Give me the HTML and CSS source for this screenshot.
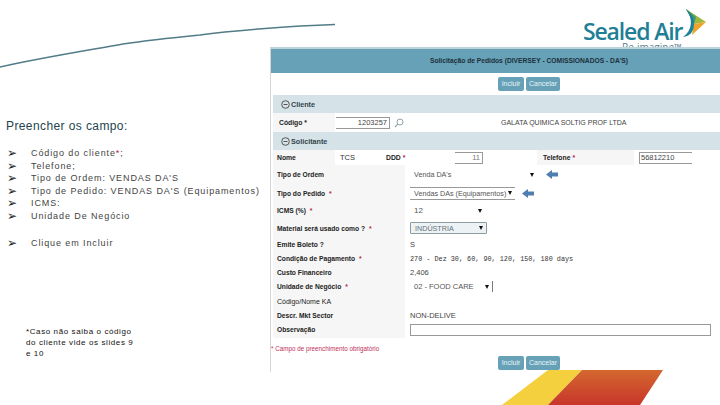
FILE: index.html
```html
<!DOCTYPE html>
<html lang="pt">

<head>
    <meta charset="UTF-8">
    <title>Solicitação de Pedidos</title>
    <link rel="stylesheet" href="styles.css">
</head>

<body>
    <div class="slide">
        <svg class="curve" width="340" height="70" viewBox="0 0 340 70">
            <path d="M0 67 C40 58 90 50 123 44 C150 40 180 37 200 35 C230 31 290 26 335 24.500" fill="none" stroke="#527c87" stroke-width="1.5" />
        </svg>

        <div class="logo">
            <div class="logo-name">Sealed Air</div>
            <div class="logo-tag">Re-imagine&#8482;</div>
            <svg class="logo-sail" width="26" height="32" viewBox="0 0 26 32">
                <path d="M3 1 L23 14 L11 16 Z" fill="#9db83c" />
                <path d="M3 1 L13 9 L11 16 Z" fill="#3d9a78" />
                <path d="M23 14 L11 16 L9 27 Z" fill="#eea32d" />
                <path d="M3 1 C10 10 10 22 0 29 C7 28 11 24 11 16 C11 10 8 5 3 1 Z" fill="#1f7f96" />
            </svg>
        </div>

        <div class="intro">
            <h1 class="intro-title">Preencher os campo:</h1>
            <ul class="steps">
                <li><span class="mark">&#10146;</span>Código do cliente<span class="req">*</span>;</li>
                <li><span class="mark">&#10146;</span>Telefone;</li>
                <li><span class="mark">&#10146;</span>Tipo de Ordem: VENDAS DA'S</li>
                <li><span class="mark">&#10146;</span>Tipo de Pedido: VENDAS DA'S (Equipamentos)</li>
                <li><span class="mark">&#10146;</span>ICMS:</li>
                <li><span class="mark">&#10146;</span>Unidade De Negócio</li>
            </ul>
            <ul class="steps steps-last">
                <li><span class="mark">&#10146;</span>Clique em Incluir</li>
            </ul>
            <p class="note">*Caso não saiba o código<br>do cliente vide os slides 9<br>e 10</p>
        </div>

        <div class="panel">
            <div class="panel-head">Solicitação de Pedidos (DIVERSEY - COMISSIONADOS - DA'S)</div>
            <div class="actions">
                <span class="btn btn-add">Incluir</span>
                <span class="btn btn-cancel">Cancelar</span>
            </div>

            <div class="section">
                <svg class="toggle" width="9" height="9" viewBox="0 0 9 9">
                    <circle cx="4.500" cy="4.500" r="3.800" fill="none" stroke="#555" />
                    <path d="M2.500 4.500 H6.500" stroke="#555" />
                </svg>
                Cliente
            </div>
            <div class="row row-client">
                <div class="cell-label cell-code">Código *</div>
                <div class="input input-code">1203257</div>
                <svg class="search" width="10" height="10" viewBox="0 0 10 10">
                    <circle cx="6" cy="4" r="3" fill="none" stroke="#8fa5ae" />
                    <path d="M3.800 6.200 L1 9" stroke="#8fa5ae" stroke-width="1.200" />
                </svg>
                <div class="client-name">GALATA QUIMICA SOLTIG PROF LTDA</div>
            </div>

            <div class="section">
                <svg class="toggle" width="9" height="9" viewBox="0 0 9 9">
                    <circle cx="4.500" cy="4.500" r="3.800" fill="none" stroke="#555" />
                    <path d="M2.500 4.500 H6.500" stroke="#555" />
                </svg>
                Solicitante
            </div>
            <div class="row row-contact">
                <div class="cell-label cell-name">Nome</div>
                <div class="contact-value">TCS</div>
                <div class="cell-label cell-ddd">DDD <span class="req">*</span></div>
                <div class="input input-ddd">11</div>
                <div class="cell-label cell-phone">Telefone <span class="req">*</span></div>
                <div class="input input-phone">56812210</div>
            </div>

            <div class="fields">
                <div class="field-label">Tipo de Ordem</div>
                <div class="field-value">
                    <div class="select select-order">Venda DA's<i class="caret"></i></div>
                    <svg class="pointer pointer-order" width="12" height="9" viewBox="0 0 12 9">
                        <polygon points="0,4.500 6,0 6,2.500 12,2.500 12,6.500 6,6.500 6,9" fill="#4f7fb0" />
                    </svg>
                </div>

                <div class="field-label">Tipo do Pedido <span class="req">*</span></div>
                <div class="field-value">
                    <div class="select select-type">Vendas DAs (Equipamentos)<i class="caret"></i></div>
                    <svg class="pointer pointer-type" width="12" height="9" viewBox="0 0 12 9">
                        <polygon points="0,4.500 6,0 6,2.500 12,2.500 12,6.500 6,6.500 6,9" fill="#4f7fb0" />
                    </svg>
                </div>

                <div class="field-label">ICMS (%) <span class="req">*</span></div>
                <div class="field-value">
                    <div class="select select-icms">12<i class="caret"></i></div>
                </div>

                <div class="field-label">Material será usado como ? <span class="req">*</span></div>
                <div class="field-value">
                    <div class="select select-material">INDÚSTRIA<i class="caret"></i></div>
                </div>

                <div class="field-label">Emite Boleto ?</div>
                <div class="field-value">S</div>

                <div class="field-label">Condição de Pagamento <span class="req">*</span></div>
                <div class="field-value field-mono">270 - Dez 30, 60, 90, 120, 150, 180 days</div>

                <div class="field-label">Custo Financeiro</div>
                <div class="field-value">2,406</div>

                <div class="field-label">Unidade de Negócio <span class="req">*</span></div>
                <div class="field-value">
                    <div class="select select-unit">02 - FOOD CARE<i class="caret"></i></div>
                </div>

                <div class="field-label field-label-big">Código/Nome KA</div>
                <div class="field-value"></div>

                <div class="field-label">Descr. Mkt Sector</div>
                <div class="field-value">NON-DELIVE</div>

                <div class="field-label">Observação</div>
                <div class="field-value">
                    <div class="textarea"></div>
                </div>
            </div>

            <div class="required-note">* Campo de preenchimento obrigatório</div>
            <div class="actions actions-bottom">
                <span class="btn btn-add">Incluir</span>
                <span class="btn btn-cancel">Cancelar</span>
            </div>
        </div>

        <svg class="ribbon" width="170" height="35" viewBox="0 0 170 35">
            <defs>
                <linearGradient id="ribbonRed" x1="0" y1="0" x2="0" y2="1">
                    <stop offset="0" stop-color="#d4682f" />
                    <stop offset="1" stop-color="#c8352a" />
                </linearGradient>
            </defs>
            <polygon points="46,0 80,0 46,35 0,35" fill="#f4cf3e" />
            <polygon points="80,0 161,0 138,35 46,35" fill="url(#ribbonRed)" />
        </svg>
    </div>
</body>

</html>
```

FILE: styles.css
```css
body,
h1,
p,
ul,
li {
    padding: 0;
    margin: 0;
}

li {
    list-style: none;
}

body {
    background: #fff;
    font-family: "Liberation Sans", Arial, sans-serif;
}

.slide {
    width: 720px;
    height: 405px;
    position: relative;
    overflow: hidden;
    display: flex;
}

.curve {
    position: absolute;
    left: 0;
    top: 0;
}

/* logo */
.logo {
    position: absolute;
    left: 583px;
    top: 8px;
    width: 125px;
    height: 40px;
}

.logo-name {
    position: absolute;
    left: 0;
    top: 14px;
    font-family: "Open Sans", sans-serif;
    font-size: 23px;
    line-height: 18px;
    font-weight: 600;
    letter-spacing: -1.150px;
    color: #1f7f96;
    white-space: nowrap;
}

.logo-tag {
    position: absolute;
    left: 39px;
    top: 34px;
    font-family: "Open Sans", sans-serif;
    font-size: 10px;
    line-height: 10px;
    color: #5f7f8a;
    white-space: nowrap;
}

.logo-sail {
    position: absolute;
    left: 100px;
    top: 0;
}

/* left text */
.intro {
    width: 270px;
    flex: none;
    padding: 119px 0 0 6px;
    box-sizing: border-box;
}

.intro-title {
    font-size: 12px;
    line-height: 14px;
    font-weight: normal;
    letter-spacing: 0.400px;
    color: #24444f;
}

.steps {
    margin-top: 14px;
    font-size: 9px;
    line-height: 12.600px;
    letter-spacing: 0.900px;
    color: #444;
}

.steps li {
    display: flex;
    white-space: pre;
}

.steps-last {
    margin-top: 14px;
}

.mark {
    width: 25px;
    flex: none;
    padding-left: 1px;
    box-sizing: border-box;
    font-family: "DejaVu Sans", sans-serif;
    font-size: 12px;
    line-height: 12px;
    letter-spacing: 0;
    color: #222;
}

.req {
    color: #b3253f;
}

.note {
    margin: 77px 0 0 20px;
    font-size: 8px;
    line-height: 11px;
    letter-spacing: 0.600px;
    color: #111;
    white-space: nowrap;
}

/* form panel */
.panel {
    width: 450px;
    height: 325px;
    flex: none;
    margin-top: 47px;
    border-left: 1px solid #d5d5d5;
    box-sizing: border-box;
    display: flex;
    flex-direction: column;
    font-size: 7.500px;
    color: #333;
    background: #fff;
    position: relative;
}

.panel-head {
    height: 26px;
    border-top: 2px solid #bdd3dc;
    box-sizing: border-box;
    background: #66a1b8;
    text-align: center;
    line-height: 23px;
    font-weight: bold;
    font-size: 6.700px;
    color: #1d2f38;
    padding-left: 67px;
    white-space: nowrap;
}

.actions {
    height: 22px;
    flex: none;
    display: flex;
    gap: 2px;
    align-items: center;
    padding-left: 227px;
}

.actions-bottom {
    height: 14px;
    margin-top: 1px;
}

.btn {
    height: 14px;
    border-radius: 2px;
    background: #66a1b8;
    color: #eaf3f6;
    line-height: 14px;
    font-size: 7px;
    text-align: center;
    box-sizing: border-box;
}

.btn-add {
    width: 26px;
}

.btn-cancel {
    width: 34px;
}

.section {
    height: 18px;
    flex: none;
    margin-left: 2px;
    padding-left: 8px;
    display: flex;
    align-items: center;
    gap: 1px;
    background: #d5e2e7;
    font-weight: bold;
    font-size: 7.200px;
    color: #33444c;
}

.row {
    display: flex;
    align-items: center;
    margin-left: 2px;
    flex: none;
}

.row-client {
    height: 19px;
}

.row-contact {
    height: 15px;
}

.cell-label {
    height: 100%;
    box-sizing: border-box;
    background: #f6f6f6;
    display: flex;
    align-items: center;
    gap: 2px;
    font-weight: bold;
    font-size: 6.800px;
    color: #222;
}

.cell-code {
    width: 62px;
    padding-left: 6px;
}

.cell-name {
    width: 62px;
    padding-left: 4px;
}

.contact-value {
    width: 51px;
    padding-left: 5px;
    box-sizing: border-box;
}

.cell-ddd {
    width: 69px;
    background: #fff;
}

.cell-phone {
    width: 97px;
    margin-left: 54px;
    padding-left: 6px;
}

.input {
    height: 12px;
    box-sizing: border-box;
    border: 1px solid #999;
    border-width: 1px 1px 1px 0;
    line-height: 10px;
    font-size: 7.500px;
    text-align: right;
    color: #444;
}

.input-code {
    width: 54px;
    margin-left: 1px;
    padding-right: 2px;
}

.search {
    margin-left: 4px;
}

.client-name {
    margin-left: 97px;
    font-size: 7px;
    color: #444;
    white-space: nowrap;
}

.input-ddd {
    width: 28px;
    padding-right: 2px;
    color: #777;
}

.input-phone {
    width: 53px;
    margin-left: 5px;
    border-width: 1px 0 1px 1px;
    padding-left: 1px;
    text-align: left;
}

.fields {
    margin-left: 2px;
    display: grid;
    grid-template-columns: 132px 1fr;
    grid-template-rows: 19px 18px 17px 18px 14px 14px 14px 15px 15px 12px 17px;
    flex: none;
}

.field-label {
    background: #f6f6f6;
    padding-left: 4px;
    display: flex;
    align-items: center;
    gap: 2px;
    color: #222;
    font-weight: bold;
    font-size: 6.700px;
    white-space: pre;
}

.field-label-big {
    font-weight: normal;
    font-size: 7px;
}

.field-value {
    padding-left: 5px;
    display: flex;
    align-items: center;
    color: #444;
    white-space: nowrap;
}

.field-mono {
    font-family: "Liberation Mono", monospace;
    font-size: 6.800px;
    color: #333;
    padding-top: 1px;
    box-sizing: border-box;
}

.select {
    height: 12px;
    padding: 0 3px 0 4px;
    box-sizing: border-box;
    display: flex;
    align-items: center;
    justify-content: space-between;
    font-size: 7.200px;
    color: #555;
}

.caret {
    width: 0;
    height: 0;
    border-style: solid;
    border-width: 4px 2.500px 0;
    border-color: #111 transparent transparent;
}

.select-order {
    width: 127px;
}

.select-type {
    width: 105px;
    height: 13px;
    border: 1px solid #999;
    border-width: 1px 0;
}

.select-icms {
    width: 75px;
    font-size: 8px;
}

.select-material {
    width: 77px;
    border: 1px solid #8f9aa0;
    border-radius: 1px;
    background: #edf2f5;
    color: #66727a;
}

.select-unit {
    width: 83px;
    height: 11px;
    border-right: 1px solid #777;
    font-size: 7.500px;
}

.pointer-order {
    margin-left: 9px;
}

.pointer-type {
    margin-left: 7px;
}

.textarea {
    width: 301px;
    height: 12px;
    border: 1px solid #999;
    box-sizing: border-box;
    background: #fff;
}

.required-note {
    margin: 5px 0 0 0;
    height: 12px;
    line-height: 12px;
    color: #c0305a;
    font-size: 6.300px;
    white-space: pre;
}

.ribbon {
    position: absolute;
    left: 502px;
    top: 370px;
}
```
